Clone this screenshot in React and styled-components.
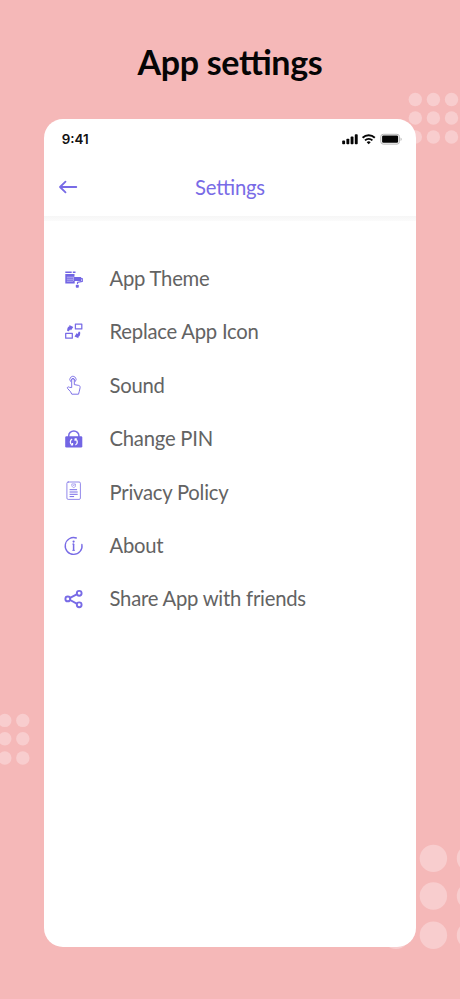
//------------------------------ MODULE -------------------------------------
import React from "react";
import styled, { createGlobalStyle } from "styled-components";

//------------------------------ CSS ----------------------------------------
const GlobalStyle = createGlobalStyle`
    *{
        box-sizing:border-box;
    }
    body{
        margin:0;
        background:#f5b8b8;
        font-family:Lato, "Liberation Sans", sans-serif;
        font-feature-settings:"liga" 1;
    }
`;
const StyledPage = styled.div`
    position:relative;
    display:flex;
    flex-direction:column;
    align-items:center;
    width:460px;
    height:999px;
    overflow:hidden;
    background:#f5b8b8;
`;
const StyledDots = styled.svg`
    position:absolute;
    left:0;
    top:0;
    fill:#f8cdce;
`;
const StyledTitle = styled.h1`
    position:relative;
    height:119px;
    margin:0;
    padding-top:41px;
    font-size:34px;
    line-height:42px;
    font-weight:700;
    letter-spacing:-0.35px;
    color:#050505;
    white-space:nowrap;
`;
const StyledPhone = styled.main`
    position:relative;
    width:372.6px;
    height:827.5px;
    border-radius:19px;
    background:#fff;
    overflow:hidden;
`;
const StyledStatus = styled.div`
    display:flex;
    justify-content:space-between;
    align-items:center;
    height:40px;
    padding:0 14px 0 18px;
`;
const StyledTime = styled.span`
    font-family:Inter, sans-serif;
    font-size:13.4px;
    font-weight:600;
    color:#111;
`;
const StyledHeader = styled.header`
    display:grid;
    grid-template-columns:48px 1fr 48px;
    align-items:center;
    height:57px;
    color:#786be6;
`;
const StyledBack = styled.button`
    display:flex;
    padding:0 0 1px 14px;
    border:0;
    background:none;
    color:inherit;
`;
const StyledHeading = styled.h2`
    margin:0;
    padding-bottom:2px;
    font-size:20.3px;
    line-height:26px;
    font-weight:400;
    letter-spacing:-0.22px;
    text-align:center;
`;
const StyledDivider = styled.div`
    height:5px;
    background:linear-gradient(#f6f6f6, #fbfbfb);
`;
const StyledList = styled.ul`
    margin:0;
    padding:30.8px 0 0 18.3px;
    list-style:none;
`;
const StyledRow = styled.li`
    display:flex;
    align-items:center;
    gap:23.5px;
    height:53.4px;
    color:#636363;
    white-space:nowrap;
`;
const StyledLabel = styled.span`
    padding-bottom:1px;
    font-size:20.25px;
    line-height:26px;
    letter-spacing:-0.23px;
`;
const StyledIcon = styled.svg`
    flex:none;
    width:24px;
    height:24px;
    fill:none;
    stroke:#786be6;
    stroke-width:${({weight}) => weight || 1};
    stroke-linecap:round;
    stroke-linejoin:round;
    .solid{
        fill:#7265e4;
        stroke:none;
    }
    .cut{
        stroke:#fff;
    }
`;

//------------------------------ ICON ---------------------------------------
const ThemeIcon = () => (
    <StyledIcon viewBox="0 0 24 24" weight="1.2">
        <path className="solid" d="M3.3 5.4h6.4v1.5H3.3zM10.8 5.4h2.7v1.5h-2.7zM3.3 8h9.2v2.8h-1v4.1h1.2v2.6H3.3z" />
        <path className="cut" strokeWidth=".5" d="M5.2 11.2h5.6M5.2 13.2h5.6M5.2 15.2h5.6" />
        <rect className="solid" x="11.8" y="10.9" width="7.4" height="4.2" rx=".5" />
        <path d="M19 12.7h1.3v2.7l-4.8 1v1" />
        <rect className="solid" x="13.8" y="18.7" width="3" height="3" rx=".7" />
    </StyledIcon>
);

const ReplaceIcon = () => (
    <StyledIcon viewBox="0 0 24 24" weight="1.25">
        <rect x="13.4" y="4" width="6.4" height="4.9" />
        <rect x="3.7" y="13.3" width="6.6" height="4.9" />
        <path className="solid" d="M5.2 11c-.2-2.7.7-4.3 2.3-4.7l-.2-1.2 4 1.8-2.4 3.5-.4-1c-.8.2-1.2.8-1.5 1.9zM18.1 11.8c.5 2.8-.3 4.6-1.8 5.1l.3 1.3-4.1-1.8 2.3-3.5.5 1.1c.6-.3 1-.9 1.2-2.2z" />
    </StyledIcon>
);

const SoundIcon = () => (
    <StyledIcon viewBox="0 0 24 24" weight=".95">
        <path d="M9.7 14.2V6.8a1.3 1.3 0 0 1 2.6 0v4.8l4.3.8c1.2.3 1.7 1 1.5 2.2l-.8 3.7-.8 2.9H9.8l-1.3-2.5-3-3.3c-.6-1.3.8-2 1.7-1.3z" />
        <path strokeWidth=".85" d="M8.4 8.4a3.2 3.2 0 1 1 5.1 0M9.1 7.1a1.9 1.9 0 0 1 3.7 0" />
    </StyledIcon>
);

const PinIcon = () => (
    <StyledIcon viewBox="0 0 24 24" weight="1.5">
        <path d="M6.7 9.5V8.7a5.1 4.7 0 0 1 10.2 0v.8" />
        <rect className="solid" x="3.2" y="9.3" width="17.1" height="11.3" rx="1.3" />
        <path className="cut" strokeLinecap="butt" strokeWidth="1.3" d="M10.2 12.1c-2.5.9-2.5 5 0 5.8M13.4 12.1c2.5.9 2.5 5 0 5.8M8.8 17.9h1.7v-1.8M14.8 12h-1.7v1.8" />
    </StyledIcon>
);

const PolicyIcon = () => (
    <StyledIcon viewBox="0 0 24 24" weight="1">
        <rect x="4.9" y="2" width="13.5" height="17.4" rx="1.3" strokeOpacity=".8" />
        <path d="M10.2 3.9h3.2v2.7l-1.6 1-1.6-1zM11.3 5.2l.5.5.8-.9" strokeWidth=".7" strokeOpacity=".8" />
        <path d="M8 9.7h6.7M8 12h7.3M8 14.3h7.3M8 16.6h3.7" />
    </StyledIcon>
);

const AboutIcon = () => (
    <StyledIcon viewBox="0 0 24 24" weight="1.35">
        <path d="M14.3 5A8.4 8.4 0 1 0 19.9 11.5" />
        <path d="M11.6 11.2v5.9" strokeWidth="1.5" />
        <path d="M10.7 11h.9M10.6 17.4h2" strokeWidth=".8" />
        <circle className="solid" cx="11.6" cy="8.6" r="1.1" />
    </StyledIcon>
);

const ShareIcon = () => (
    <StyledIcon viewBox="0 0 24 24" weight="1.9">
        <path d="M8.1 10.8l6.6-3.5M8.1 13l6.6 3.6" />
        <circle cx="5.8" cy="11.9" r="2.4" />
        <circle cx="17.2" cy="6.3" r="2.4" />
        <circle cx="17.2" cy="17.8" r="2.4" />
    </StyledIcon>
);

const menus = [
    { name : "App Theme", Icon : ThemeIcon },
    { name : "Replace App Icon", Icon : ReplaceIcon },
    { name : "Sound", Icon : SoundIcon },
    { name : "Change PIN", Icon : PinIcon },
    { name : "Privacy Policy", Icon : PolicyIcon },
    { name : "About", Icon : AboutIcon },
    { name : "Share App with friends", Icon : ShareIcon },
];

const dotGroups = [
    { xs : [415.3, 433.4, 451.5], ys : [99.5, 118, 137], r : 6.7 },
    { xs : [4.8, 22.8], ys : [720.4, 738.8, 758], r : 6.7 },
    { xs : [396, 433.4, 470.5], ys : [858.4, 896, 935.2], r : 13.7 },
];

//------------------------------ COMPONENT ----------------------------------
const Dots = () => (
    <StyledDots width="460" height="999">
        {dotGroups.map(({ xs, ys, r }) => (
            xs.map((x) => ys.map((y) => <circle key={`${x}-${y}`} cx={x} cy={y} r={r} />))
        ))}
    </StyledDots>
);

const StatusIcons = () => (
    <svg width="60" height="12" viewBox="0 0 60 12" fill="#050505">
        <rect x=".2" y="7.6" width="2.9" height="3.6" rx=".8" />
        <rect x="4.4" y="5.8" width="2.9" height="5.4" rx=".8" />
        <rect x="8.6" y="3.6" width="2.9" height="7.6" rx=".8" />
        <rect x="12.8" y="1.3" width="2.9" height="9.9" rx=".8" />
        <g fill="none" stroke="#050505" strokeWidth="1.9">
            <path d="M20.6 4.7a9 9 0 0 1 12.2 0" />
            <path d="M23 7.4a5.4 5.4 0 0 1 7.4 0" />
        </g>
        <path d="M24.7 9.2a2.9 2.9 0 0 1 4 0l-2 2.1z" />
        <rect x="38.8" y="1.3" width="18.6" height="9.8" rx="2.4" fill="none" stroke="#b5b5b5" />
        <rect x="40.1" y="2.6" width="16" height="7.2" rx="1.2" />
        <path d="M58.6 4.5c1.4.6 1.4 2.8 0 3.4z" fill="#aaa" />
    </svg>
);

const App = () => {
    //render
    return(
        <StyledPage>
            <GlobalStyle />
            <Dots />
            <StyledTitle>App settings</StyledTitle>
            <StyledPhone>
                <StyledStatus>
                    <StyledTime>9:41</StyledTime>
                    <StatusIcons />
                </StyledStatus>
                <StyledHeader>
                    <StyledBack aria-label="Back">
                        <svg width="20" height="16" viewBox="0 0 20 16" fill="none" stroke="currentColor" strokeWidth="1.8" strokeLinecap="round" strokeLinejoin="round">
                            <path d="M18.3 8H2M7.5 2.6L2 8L7.5 13.4" />
                        </svg>
                    </StyledBack>
                    <StyledHeading>Settings</StyledHeading>
                </StyledHeader>
                <StyledDivider />
                <StyledList>
                    {menus.map(({ name, Icon }) => (
                        <StyledRow key={name}>
                            <Icon />
                            <StyledLabel>{name}</StyledLabel>
                        </StyledRow>
                    ))}
                </StyledList>
            </StyledPhone>
        </StyledPage>
    )
}

export default App;
